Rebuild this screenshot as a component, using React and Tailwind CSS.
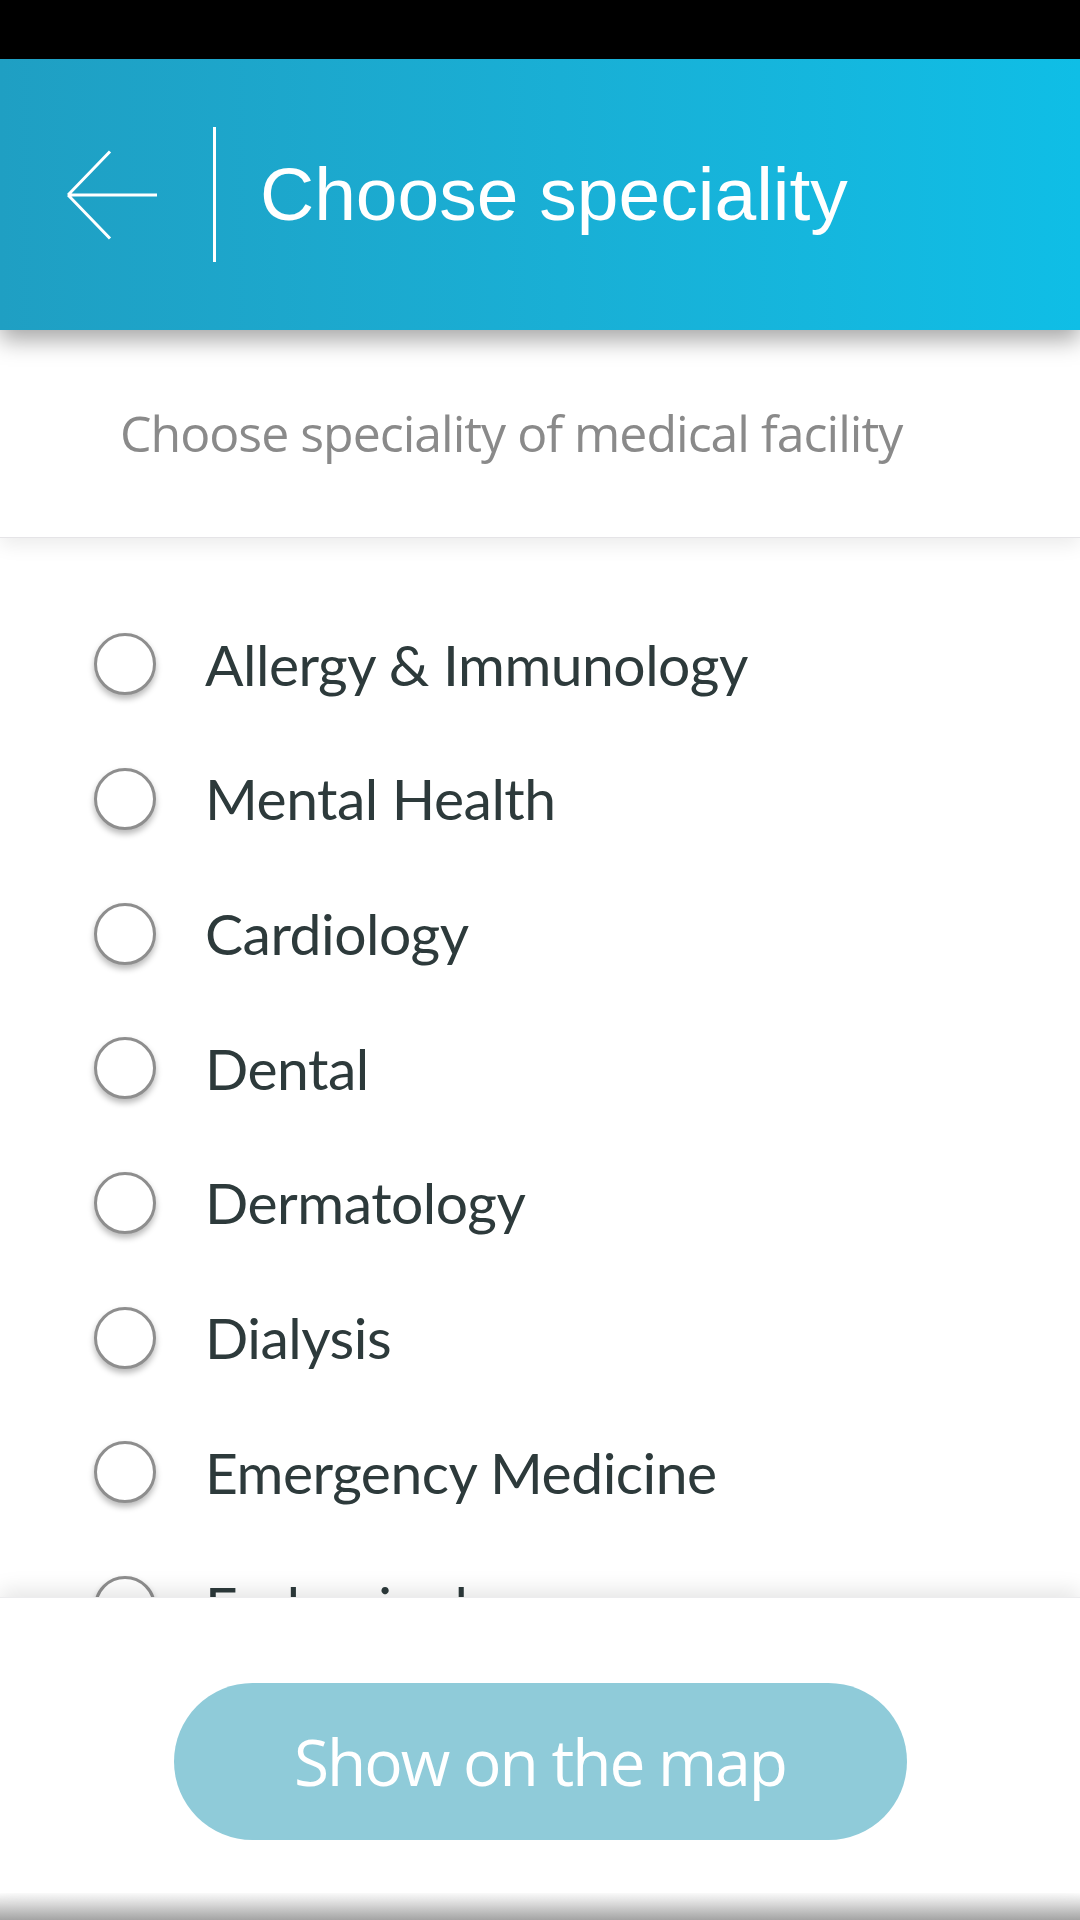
import { useState } from 'react'

const specialities = [
  'Allergy & Immunology',
  'Mental Health',
  'Cardiology',
  'Dental',
  'Dermatology',
  'Dialysis',
  'Emergency Medicine',
  'Endocrinology',
]

export default function App() {
  const [selected, setSelected] = useState(null)

  return (
    <div className="w-[1080px] h-[1920px] flex flex-col bg-white overflow-hidden">
      {/* Status bar */}
      <div className="h-[59px] shrink-0 bg-black" />

      {/* Header */}
      <header className="relative z-20 h-[271px] shrink-0 flex items-center pl-[67px] bg-linear-to-r from-[#1f9fc3] to-[#0fbee6] shadow-[0_10px_22px_rgba(0,0,0,0.35)]">
        <button className="w-[90px] h-[90px] shrink-0">
          <svg className="w-[90px] h-[90px]" viewBox="0 0 90 90" fill="none" stroke="white" strokeWidth={3}>
            <path d="M1 45H90M1 45L43 1.5M1 45L43 88.5" />
          </svg>
        </button>
        <div className="ml-[56px] w-[3px] h-[135px] bg-white" />
        <h1 className="ml-[44px] text-white text-[75px] leading-none font-['Liberation_Sans',Arial,sans-serif]">
          Choose speciality
        </h1>
      </header>

      {/* Subtitle */}
      <div className="relative z-10 h-[207px] shrink-0 flex items-center pl-[120px] bg-white shadow-[0_1px_0_#e5e4e7,0_8px_18px_rgba(0,0,0,0.08)]">
        <p className="text-[50px] text-[#8a8a8a] tracking-[-1px] font-['Open_Sans',sans-serif]">
          Choose speciality of medical facility
        </p>
      </div>

      {/* List */}
      <ul className="flex-1 overflow-hidden pt-[60px] pl-[94px]">
        {specialities.map((s) => (
          <li
            key={s}
            onClick={() => setSelected(s)}
            className="h-[134.7px] flex items-center cursor-pointer"
          >
            <span className="w-[62px] h-[62px] shrink-0 rounded-full border-[3px] border-[#8e8e8e] bg-white shadow-[0_4px_6px_rgba(0,0,0,0.28)] flex items-center justify-center">
              {selected === s && <span className="w-[34px] h-[34px] rounded-full bg-[#17aed6]" />}
            </span>
            <span className="ml-[49px] text-[57px] text-[#2d3a3b] tracking-[-0.5px] font-['Lato',sans-serif]">{s}</span>
          </li>
        ))}
      </ul>

      {/* Bottom */}
      <div className="relative z-10 h-[295px] shrink-0 bg-white pt-[85px] shadow-[0_-1px_0_#ececee,0_-8px_20px_rgba(0,0,0,0.1)]">
        <button className="mx-auto flex items-center justify-center w-[733px] h-[157px] rounded-full bg-[#8fcbd9] text-white text-[64px] tracking-[-2px] font-['Open_Sans',sans-serif]">
          Show on the map
        </button>
      </div>
      <div className="h-[27px] shrink-0 bg-linear-to-b from-white to-[#a4a4a4]" />
    </div>
  )
}
